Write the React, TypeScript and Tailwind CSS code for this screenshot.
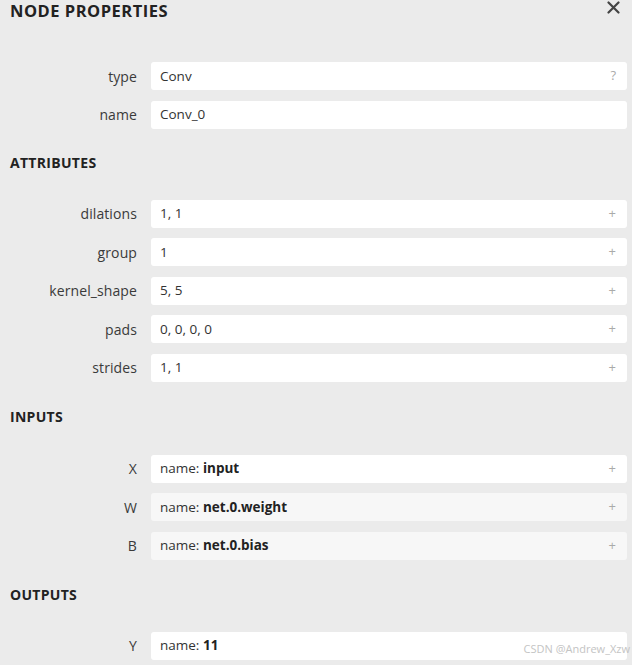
import React from 'react'

type Row = { label: string; value: React.ReactNode; icon?: string; muted?: boolean }

const attributes: Row[] = [
  { label: 'dilations', value: '1, 1' },
  { label: 'group', value: '1' },
  { label: 'kernel_shape', value: '5, 5' },
  { label: 'pads', value: '0, 0, 0, 0' },
  { label: 'strides', value: '1, 1' },
]

const named = (name: string) => (
  <>
    name: <b className="font-bold text-[#222]">{name}</b>
  </>
)

const inputs: Row[] = [
  { label: 'X', value: named('input') },
  { label: 'W', value: named('net.0.weight'), muted: true },
  { label: 'B', value: named('net.0.bias'), muted: true },
]

function PropRow({ label, value, icon = '+', muted }: Row) {
  return (
    <div className="flex items-center h-[28px]">
      <div className="w-[137px] shrink-0 text-right text-[14px] tracking-[0.1px] text-[#3a3a3a]">{label}</div>
      <div
        className={
          muted
            ? 'ml-[14px] mr-[5px] flex-1 h-full flex items-center justify-between rounded-[3px] bg-[#f7f7f7] pl-[9px] pr-[11px]'
            : 'ml-[14px] mr-[5px] flex-1 h-full flex items-center justify-between rounded-[3px] bg-white pl-[9px] pr-[11px]'
        }>
        <span className="text-[13.5px] text-[#333]">{value}</span>
        <span className="text-[13px] text-[#aaa]">{icon}</span>
      </div>
    </div>
  )
}

function Heading({ children }: { children: React.ReactNode }) {
  return (
    <div className="h-[22px] flex items-center pl-[10px] text-[14px] font-bold text-[#222] tracking-[0.3px]">
      {children}
    </div>
  )
}

function Rows({ rows }: { rows: Row[] }) {
  return (
    <div className="flex flex-col gap-[10.5px]">
      {rows.map((r) => (
        <PropRow key={r.label} {...r} />
      ))}
    </div>
  )
}

export default function App() {
  return (
    <div
      className="relative w-[632px] h-[665px] overflow-hidden bg-[#ebebeb]"
      style={{ fontFamily: '"Open Sans", "Liberation Sans", sans-serif' }}>
      <div className="flex items-center justify-between h-[22px] pr-[12px]">
        <div className="pl-[10px] text-[16.5px] font-bold text-[#222] tracking-[0.5px]">NODE PROPERTIES</div>
        <svg width="13" height="13" viewBox="0 0 13 13" className="-mt-[8px]">
          <path d="M1.5 1.5L11.5 11.5M11.5 1.5L1.5 11.5" stroke="#444" strokeWidth="2.2" strokeLinecap="round" />
        </svg>
      </div>

      <div className="mt-[40px]">
        <Rows
          rows={[
            { label: 'type', value: 'Conv', icon: '?' },
            { label: 'name', value: 'Conv_0', icon: '' },
          ]}
        />
      </div>

      <div className="mt-[23px]">
        <Heading>ATTRIBUTES</Heading>
      </div>
      <div className="mt-[26px]">
        <Rows rows={attributes} />
      </div>

      <div className="mt-[24px]">
        <Heading>INPUTS</Heading>
      </div>
      <div className="mt-[27px]">
        <Rows rows={inputs} />
      </div>

      <div className="mt-[24px]">
        <Heading>OUTPUTS</Heading>
      </div>
      <div className="mt-[26px]">
        <Rows rows={[{ label: 'Y', value: named('11'), icon: '' }]} />
      </div>

      <div className="absolute right-[2px] bottom-[8px] text-[11px] text-[#c4c4c4]">CSDN @Andrew_Xzw</div>
    </div>
  )
}
